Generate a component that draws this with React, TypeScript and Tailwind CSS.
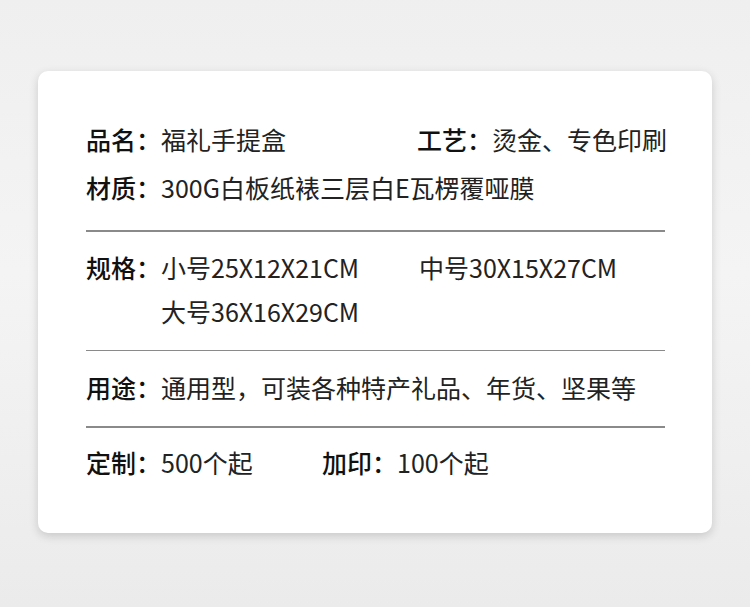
const font = { fontFamily: '"Noto Sans CJK SC", "Noto Sans", sans-serif' };

const Field = ({ label, value }: { label: string; value: string }) => (
  <div className="flex whitespace-nowrap">
    <span className="font-medium text-[#111]">{label}：</span>
    <span className="text-[#222]">{value}</span>
  </div>
);

const Divider = () => <div className="h-[1.5px] bg-[#8a8a8a]" />;

export default function App() {
  return (
    <div
      className="w-[750px] h-[607px] bg-[linear-gradient(180deg,#efefef_0%,#f4f4f4_45%,#ebebeb_100%)] pt-[71px] pl-[38px]"
      style={font}
    >
      <div className="w-[674px] h-[462px] bg-white rounded-[10px] shadow-[0_3px_10px_rgba(0,0,0,0.16)] pt-[44px] pl-[48px] pr-[47px] text-[25px]">
        <div className="leading-[48px]">
          <div className="grid grid-cols-[331px_1fr]">
            <Field label="品名" value="福礼手提盒" />
            <Field label="工艺" value="烫金、专色印刷" />
          </div>
          <Field label="材质" value="300G白板纸裱三层白E瓦楞覆哑膜" />
        </div>
        <div className="mt-[19px]">
          <Divider />
        </div>
        <div className="mt-[13px] leading-[44px] flex">
          <span className="font-medium text-[#111]">规格：</span>
          <div className="grid grid-cols-[258px_1fr] text-[#222] whitespace-nowrap">
            <span>小号25X12X21CM</span>
            <span>中号30X15X27CM</span>
            <span>大号36X16X29CM</span>
          </div>
        </div>
        <div className="mt-[17px]">
          <Divider />
        </div>
        <div className="mt-[14px] leading-[44px]">
          <Field label="用途" value="通用型，可装各种特产礼品、年货、坚果等" />
        </div>
        <div className="mt-[17px]">
          <Divider />
        </div>
        <div className="mt-[12px] leading-[44px] grid grid-cols-[236px_1fr]">
          <Field label="定制" value="500个起" />
          <Field label="加印" value="100个起" />
        </div>
      </div>
    </div>
  );
}
